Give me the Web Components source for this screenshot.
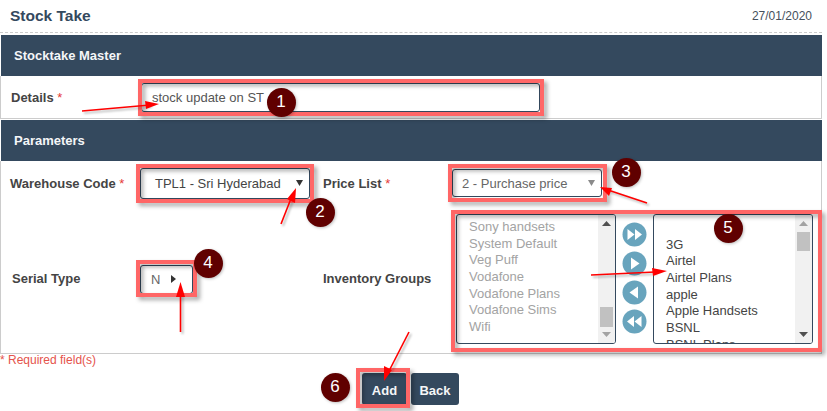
<!DOCTYPE html>
<html>
<head>
<meta charset="utf-8">
<title>Stock Take</title>
<style>
  html, body { margin: 0; padding: 0; background: #fff; }
  body { font-family: "Liberation Sans", Arial, sans-serif; width: 827px; height: 411px; overflow: hidden; position: relative; }
</style>
</head>
<body>
<st-page>
  <st-header title-text="Stock Take" date="27/01/2020"></st-header>
  <st-bar>Stocktake Master</st-bar>
  <st-details></st-details>
  <st-bar>Parameters</st-bar>
  <st-params></st-params>
  <st-footer></st-footer>
</st-page>
<st-notes></st-notes>

<script>
function define(name, html, init) {
  const template = document.createElement('template');
  template.innerHTML = html;
  customElements.define(name, class extends HTMLElement {
    constructor() {
      super();
      this.attachShadow({ mode: 'open' });
      this.shadowRoot.appendChild(template.content.cloneNode(true));
    }
    connectedCallback() {
      if (init) init(this);
    }
  });
}

define('st-page', `
<style>
  :host { display: flex; flex-direction: column; width: 822px; }
</style>
<slot></slot>
`);

define('st-header', `
<style>
  :host { display: flex; justify-content: space-between; align-items: center; height: 32px; padding: 0 10px 0 10px; border-bottom: 1px dashed #ccc; margin-bottom: 2px; }
  .title { font-size: 15.5px; font-weight: bold; color: #34495e; }
  .date { font-size: 12px; color: #45505c; }
</style>
<span class="title"></span><span class="date"></span>
`, el => {
  el.shadowRoot.querySelector('.title').textContent = el.getAttribute('title-text');
  el.shadowRoot.querySelector('.date').textContent = el.getAttribute('date');
});

define('st-bar', `
<style>
  :host { display: flex; align-items: center; height: 41px; background: #34495e; color: #f4f6f8; font-size: 13px; font-weight: bold; padding-left: 13px; margin-left: 1px; }
</style>
<slot></slot>
`);

define('st-label', `
<style>
  :host { display: block; font-size: 13px; font-weight: bold; color: #444; white-space: nowrap; }
  .req { color: #e53935; font-weight: normal; }
</style>
<slot></slot><span class="req"></span>
`, el => {
  if (el.hasAttribute('required')) el.shadowRoot.querySelector('.req').textContent = ' *';
});

define('st-input', `
<style>
  :host { display: flex; align-items: center; box-sizing: border-box; background: #fff; border: 1px solid #34495e; border-radius: 3px; font-size: 13px; color: #555; padding-left: 10px; height: 29px; }
</style>
<slot></slot>
`);

define('st-select', `
<style>
  :host { display: flex; align-items: center; justify-content: space-between; box-sizing: border-box; background: #fff; border: 1px solid #34495e; border-radius: 3px; font-size: 13px; color: #444; height: 30px; padding: 0 6px 0 14px; }
  svg { display: block; }
  path { fill: var(--arrow, #333); }
</style>
<slot></slot>
<svg width="7" height="6" viewBox="0 0 7 6"><path d="M0 0H7L3.500 6Z"/></svg>
`, el => {
  if (el.getAttribute('pointer') === 'right') {
    const svg = el.shadowRoot.querySelector('svg');
    svg.setAttribute('width', '5');
    svg.setAttribute('height', '8');
    svg.setAttribute('viewBox', '0 0 5 8');
    svg.querySelector('path').setAttribute('d', 'M0 0L5 4L0 8Z');
  }
});

define('st-details', `
<style>
  :host { display: flex; align-items: center; height: 42px; border-left: 1px solid #ccc; border-right: 1px solid #ccc; border-bottom: 1px solid #ccc; padding-left: 10px; margin-bottom: 1px; }
  st-label { width: 130px; }
  st-input { width: 399px; }
</style>
<st-label required>Details</st-label>
<st-input>stock update on ST</st-input>
`);

define('st-listbox', `
<style>
  :host { display: flex; box-sizing: border-box; width: 160px; height: 130px; border: 1px solid #34495e; border-radius: 3px; overflow: hidden; background: #fff; font-size: 13px; line-height: 16.67px; color: var(--item, #444); }
  .items { flex: 1; padding-left: 12px; margin-top: var(--offset, 0); white-space: nowrap; }
  .track { width: 17px; background: #f1f1f1; position: relative; }
  .track svg { position: absolute; left: 4px; }
  .up { top: 6px; }
  .down { bottom: 6px; }
  .thumb { position: absolute; left: 2px; width: 13px; height: var(--thumb-h, 20px); top: var(--thumb-y, 0); background: #c1c1c1; }
</style>
<div class="items"><slot></slot></div>
<div class="track">
  <svg class="up" width="9" height="5" viewBox="0 0 9 5"><path d="M0 5H9L4.500 0Z" fill="var(--up, #505050)"/></svg>
  <div class="thumb"></div>
  <svg class="down" width="9" height="5" viewBox="0 0 9 5"><path d="M0 0H9L4.500 5Z" fill="var(--down, #505050)"/></svg>
</div>
`);

define('st-item', `
<style>:host { display: block; height: 16.67px; }</style><slot></slot>
`);

define('st-move', `
<style>
  :host { display: block; width: 25px; height: 25px; }
  svg { display: block; }
</style>
<svg width="25" height="25" viewBox="0 0 25 25">
  <circle cx="12.500" cy="12.500" r="12" fill="#68a4bd"/>
  <path class="glyph" fill="#fff" d=""/>
</svg>
`, el => {
  const glyphs = {
    all: 'M5.500 7L12.500 12.500L5.500 18ZM13 7L20 12.500L13 18Z',
    one: 'M9 6.500L17.500 12.500L9 18.500Z',
    back: 'M16 6.500L7.500 12.500L16 18.500Z',
    none: 'M19.500 7L12.500 12.500L19.500 18ZM12 7L5 12.500L12 18Z'
  };
  el.shadowRoot.querySelector('.glyph').setAttribute('d', glyphs[el.getAttribute('kind')]);
});

define('st-params', `
<style>
  :host { display: grid; grid-template-columns: 130px 183px 129px auto; grid-template-rows: 44px 148px; padding-left: 9px; border-left: 1px solid #ccc; border-right: 1px solid #ccc; border-bottom: 1px solid #ccc; align-items: center; }
  .wh { width: 170px; height: 31px; }
  .pl { width: 150px; height: 28px; padding-left: 9px; --arrow: #8a8a8a; color: #666; }
  .sn { width: 53px; height: 29px; padding: 0 16px 0 10px; color: #666; }
  .low { margin-bottom: 2px; }
  .serial { margin-left: 2px; }
  .transfer { display: flex; align-items: flex-start; margin-left: 4px; }
  .moves { display: flex; flex-direction: column; gap: 4px; margin: 8px 6px 0 6px; }
  .left { --item: #a3a3a3; --offset: -12.5px; --thumb-y: 92px; --thumb-h: 20px; --up: #505050; --down: #a3a3a3; }
  .right { --offset: 21.7px; --thumb-y: 17px; --thumb-h: 19px; --up: #a3a3a3; --down: #505050; }
</style>
<st-label required>Warehouse Code</st-label>
<st-select class="wh">TPL1 - Sri Hyderabad</st-select>
<st-label required>Price List</st-label>
<st-select class="pl">2 - Purchase price</st-select>
<st-label class="low serial">Serial Type</st-label>
<st-select class="sn" pointer="right">N</st-select>
<st-label class="low">Inventory Groups</st-label>
<div class="transfer">
  <st-listbox class="left">
    <st-item>Sandwich</st-item>
    <st-item>Sony handsets</st-item>
    <st-item>System Default</st-item>
    <st-item>Veg Puff</st-item>
    <st-item>Vodafone</st-item>
    <st-item>Vodafone Plans</st-item>
    <st-item>Vodafone Sims</st-item>
    <st-item>Wifi</st-item>
  </st-listbox>
  <div class="moves">
    <st-move kind="all"></st-move>
    <st-move kind="one"></st-move>
    <st-move kind="back"></st-move>
    <st-move kind="none"></st-move>
  </div>
  <st-listbox class="right">
    <st-item>3G</st-item>
    <st-item>Airtel</st-item>
    <st-item>Airtel Plans</st-item>
    <st-item>apple</st-item>
    <st-item>Apple Handsets</st-item>
    <st-item>BSNL</st-item>
    <st-item>BSNL Plans</st-item>
  </st-listbox>
</div>
`);

define('st-button', `
<style>
  :host { display: flex; align-items: center; justify-content: center; box-sizing: border-box; height: 32px; padding-top: 2px; background: #34495e; color: #f4f6f8; font-size: 13px; font-weight: bold; border-radius: 3px; }
</style>
<slot></slot>
`);

define('st-footer', `
<style>
  :host { display: block; }
  .req { font-size: 12px; color: #e5534b; line-height: 13px; }
  .actions { display: flex; gap: 4px; margin: 6px 0 0 362px; }
  .add { width: 45px; }
  .back { width: 48px; }
</style>
<div class="req">* Required field(s)</div>
<div class="actions">
  <st-button class="add">Add</st-button>
  <st-button class="back">Back</st-button>
</div>
`);

define('st-badge', `
<style>
  :host { position: absolute; width: 29px; height: 29px; margin: -14.5px 0 0 -14.5px; border-radius: 50%; background: #600000; color: #fff; display: flex; align-items: center; justify-content: center; font-size: 17px; box-shadow: 1px 1px 3px rgba(0,0,0,.25); }
</style>
<slot></slot>
`);

// annotations painted over the form
define('st-notes', `
<style>
  :host { position: absolute; left: 0; top: 0; width: 827px; height: 411px; display: block; pointer-events: none; }
  svg { position: absolute; left: 0; top: 0; }
  .frame { fill: none; stroke: #ff6666; stroke-width: 4; filter: drop-shadow(3px 3px 2px rgba(0,0,0,.35)); }
  .arrow { stroke: #f00; stroke-width: 1.6; fill: none; filter: drop-shadow(2px 2px 1px rgba(0,0,0,.3)); }
  .tip { fill: #f00; }
</style>
<svg width="827" height="411" viewBox="0 0 827 411">
  <rect class="frame" x="140" y="81" width="402" height="33"/>
  <rect class="frame" x="138" y="166" width="174" height="35"/>
  <rect class="frame" x="450" y="166" width="155" height="34"/>
  <rect class="frame" x="138" y="262" width="57" height="33"/>
  <rect class="frame" x="453" y="212" width="367" height="138"/>
  <rect class="frame" x="358" y="370" width="50" height="36"/>
  <g class="arrow">
    <path d="M82 111L150 105"/>
    <path d="M281 224L292 196"/>
    <path d="M647 203L608 190"/>
    <path d="M180.500 332V292"/>
    <path d="M591 275L655 272"/>
    <path d="M409 332L389 371"/>
  </g>
  <g class="tip">
    <path d="M159 104L145 101L146 109Z"/>
    <path d="M296 188L287 199L295 203Z"/>
    <path d="M600 187L609 196L612 188Z"/>
    <path d="M180.500 282L176 297H185Z"/>
    <path d="M667 271L652 268L653 276Z"/>
    <path d="M384 381L384 366L392 370Z"/>
  </g>
</svg>
<st-badge style="left:281px;top:102px">1</st-badge>
<st-badge style="left:320px;top:212px">2</st-badge>
<st-badge style="left:626px;top:172px">3</st-badge>
<st-badge style="left:208px;top:263px">4</st-badge>
<st-badge style="left:728px;top:228px">5</st-badge>
<st-badge style="left:335px;top:387px">6</st-badge>
`);
</script>
</body>
</html>
